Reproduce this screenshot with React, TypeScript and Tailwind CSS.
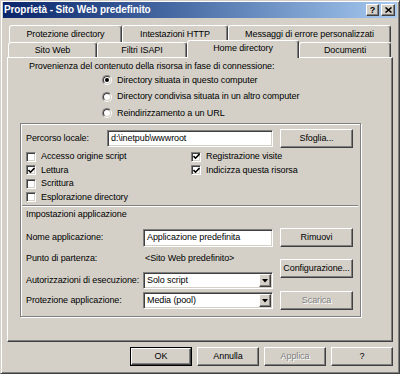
import type { ReactNode } from 'react';

const raised =
  'border border-t-white border-l-white border-r-[#404040] border-b-[#404040] shadow-[inset_-1px_-1px_0_#808080]';
const sunken =
  'border border-t-[#808080] border-l-[#808080] border-r-white border-b-white shadow-[inset_1px_1px_0_#404040,inset_-1px_-1px_0_#d4d0c8]';
const disabledText = 'text-[#808080] [text-shadow:1px_1px_0_#fff]';

function Button({
  children,
  className = '',
  disabled,
  isDefault,
}: {
  children: ReactNode;
  className?: string;
  disabled?: boolean;
  isDefault?: boolean;
}) {
  return (
    <div className={`flex ${isDefault ? 'border border-black' : ''} ${className}`}>
      <div className={`flex-1 flex items-center justify-center ${raised} ${disabled ? disabledText : ''}`}>
        {children}
      </div>
    </div>
  );
}

function Radio({ checked, label }: { checked?: boolean; label: string }) {
  return (
    <div className="flex items-center gap-[5px]">
      <div className="w-[10px] h-[10px] rounded-full border border-t-[#808080] border-l-[#808080] border-r-white border-b-white">
        <div className="w-full h-full rounded-full border border-t-[#404040] border-l-[#404040] border-r-[#d4d0c8] border-b-[#d4d0c8] bg-white flex items-center justify-center">
          {checked && <div className="w-[4px] h-[4px] rounded-full bg-black" />}
        </div>
      </div>
      <span>{label}</span>
    </div>
  );
}

function Check({ checked, label }: { checked?: boolean; label: string }) {
  return (
    <div className="flex items-center gap-[5px]">
      <div className={`w-[10px] h-[10px] bg-white flex items-center justify-center ${sunken}`}>
        {checked && (
          <svg width="7" height="7" viewBox="0 0 7 7">
            <path d="M0.5 3 L2.5 5.2 L6.5 1" fill="none" stroke="#000" strokeWidth="1.6" />
          </svg>
        )}
      </div>
      <span>{label}</span>
    </div>
  );
}

function Select({ value }: { value: string }) {
  return (
    <div className={`w-[130px] h-[17px] bg-white flex p-[1px] ${sunken}`}>
      <span className="flex-1 flex items-center pl-[2px]">{value}</span>
      <div className={`w-[12px] flex items-center justify-center bg-[#d4d0c8] ${raised}`}>
        <svg width="6" height="4" viewBox="0 0 6 4">
          <path d="M0 0 H6 L3 3.5 Z" fill="#000" />
        </svg>
      </div>
    </div>
  );
}

function Tab({ label, w, active }: { label: string; w: number; active?: boolean }) {
  return (
    <div
      style={{ width: w }}
      className={`flex items-center justify-center border-t border-l border-r border-t-white border-l-white border-r-[#404040] rounded-t-[3px] shadow-[inset_-1px_0_0_#808080] bg-[#d4d0c8] ${
        active ? 'relative z-10 h-[18px] -mb-[1px] pb-[2px]' : 'h-full'
      }`}
    >
      {label}
    </div>
  );
}

export default function App() {
  return (
    <div className="w-[400px] h-[374px] bg-[#d4d0c8] text-black text-[9px] leading-none tracking-[-0.1px] font-['Liberation_Sans',Arial,sans-serif] border border-t-[#d4d0c8] border-l-[#d4d0c8] border-r-[#404040] border-b-[#404040] shadow-[inset_1px_1px_0_#fff,inset_-1px_-1px_0_#808080] p-[2px] pt-[1px] flex flex-col">
      {/* Title bar */}
      <div className="h-[16px] flex items-center bg-gradient-to-r from-[#0a246a] to-[#a6caf0] pl-[1px] pr-[2px]">
        <span className="flex-1 text-white font-bold text-[10px] tracking-[-0.1px]">
          Proprietà - Sito Web predefinito
        </span>
        <div className="flex gap-[1px]">
          <Button className="w-[13px] h-[12px] bg-[#d4d0c8]">
            <span className="font-bold text-[9px]">?</span>
          </Button>
          <Button className="w-[14px] h-[12px] bg-[#d4d0c8] ml-[1px]">
            <svg width="7" height="6" viewBox="0 0 7 6">
              <path d="M0.5 0.5 L6.5 5.5 M6.5 0.5 L0.5 5.5" stroke="#000" strokeWidth="1.5" />
            </svg>
          </Button>
        </div>
      </div>

      <div className="flex-1 flex flex-col px-[4px]">
        {/* Tabs */}
        <div className="mt-[7px] h-[17px] flex pl-[2px]">
          <Tab label="Protezione directory" w={113} />
          <Tab label="Intestazioni HTTP" w={106} />
          <Tab label="Messaggi di errore personalizzati" w={163} />
        </div>
        <div className="h-[15px] flex items-end pl-[1px]">
          <Tab label="Sito Web" w={89} />
          <Tab label="Filtri ISAPI" w={90} />
          <Tab label="Home directory" w={112} active />
          <Tab label="Documenti" w={92} />
        </div>

        {/* Panel */}
        <div className="h-[285px] border border-t-white border-l-white border-r-[#404040] border-b-[#404040] shadow-[inset_-1px_-1px_0_#808080] flex flex-col">
          <div className="mt-[3px] h-[11px] flex items-center pl-[21px]">
            Provenienza del contenuto della risorsa in fase di connessione:
          </div>
          <div className="ml-[94px] flex flex-col">
            <div className="h-[16px] flex items-center">
              <Radio checked label="Directory situata in questo computer" />
            </div>
            <div className="h-[17px] flex items-center">
              <Radio label="Directory condivisa situata in un altro computer" />
            </div>
            <div className="h-[16px] flex items-center">
              <Radio label="Reindirizzamento a un URL" />
            </div>
          </div>

          {/* Group box */}
          <div className="mt-[2px] ml-[12px] w-[341px] h-[194px] border border-[#808080] shadow-[inset_1px_1px_0_#fff,1px_1px_0_#fff] flex flex-col">
            <div className="mt-[5px] h-[19px] flex items-center pl-[5px]">
              <span className="w-[81px]">Percorso locale:</span>
              <div className={`w-[166px] h-[17px] bg-white flex items-center pl-[3px] ${sunken}`}>
                {'d:\\inetpub\\wwwroot'}
              </div>
              <Button className="ml-[7px] w-[73px] h-[19px]">Sfoglia...</Button>
            </div>

            <div className="mt-[2px] pl-[5px] grid grid-cols-[165px_1fr] grid-rows-[13px_14px_13px_14px]">
              <div className="flex items-center"><Check label="Accesso origine script" /></div>
              <div className="flex items-center"><Check checked label="Registrazione visite" /></div>
              <div className="flex items-center"><Check checked label="Lettura" /></div>
              <div className="flex items-center"><Check checked label="Indicizza questa risorsa" /></div>
              <div className="flex items-center"><Check label="Scrittura" /></div>
              <div />
              <div className="flex items-center"><Check label="Esplorazione directory" /></div>
              <div />
            </div>

            <div className="mt-[1px] ml-[1px] mr-[2px] h-[2px] border-t border-t-[#808080] border-b border-b-white" />
            <div className="mt-[1px] h-[12px] flex items-center pl-[5px]">Impostazioni applicazione</div>

            <div className="mt-[8px] flex pl-[5px]">
              <div className="w-[247px] flex flex-col">
                <div className="h-[19px] flex items-center">
                  <span className="w-[117px]">Nome applicazione:</span>
                  <div className={`w-[130px] h-[18px] bg-white flex items-center pl-[3px] ${sunken}`}>
                    Applicazione predefinita
                  </div>
                </div>
                <div className="mt-[5px] h-[13px] flex items-center">
                  <span className="w-[117px]">Punto di partenza:</span>
                  <span className="pl-[2px]">&lt;Sito Web predefinito&gt;</span>
                </div>
                <div className="mt-[7px] h-[17px] flex items-center">
                  <span className="w-[117px]">Autorizzazioni di esecuzione:</span>
                  <Select value="Solo script" />
                </div>
                <div className="mt-[3px] h-[17px] flex items-center">
                  <span className="w-[117px]">Protezione applicazione:</span>
                  <Select value="Media (pool)" />
                </div>
              </div>
              <div className="ml-[7px] flex flex-col">
                <Button className="w-[73px] h-[19px]">Rimuovi</Button>
                <Button className="mt-[12px] w-[73px] h-[19px]">Configurazione...</Button>
                <Button className="mt-[13px] w-[73px] h-[19px]" disabled>
                  Scarica
                </Button>
              </div>
            </div>
          </div>
        </div>

        {/* Bottom buttons */}
        <div className="mt-[5px] flex justify-end gap-[5px]">
          <Button className="w-[62px] h-[19px]" isDefault>OK</Button>
          <Button className="w-[62px] h-[19px]">Annulla</Button>
          <Button className="w-[62px] h-[19px]" disabled>Applica</Button>
          <Button className="w-[62px] h-[19px]">?</Button>
        </div>
      </div>
    </div>
  );
}
